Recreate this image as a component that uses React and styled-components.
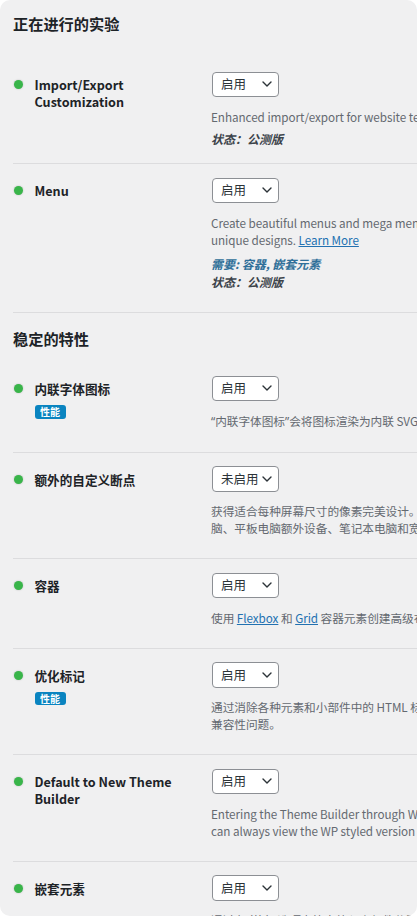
import React from "react";
import styled, { createGlobalStyle } from "styled-components";

const GlobalStyle = createGlobalStyle`
  html, body {
    margin: 0;
    padding: 0;
    background: #ffffff;
  }
  body {
    font-family: "Noto Sans CJK SC", "Noto Sans", sans-serif;
    color: #1d2327;
  }
`;

const Panel = styled.div`
  width: 417px;
  height: 916px;
  background: #f0f0f1;
  border-radius: 10px;
  overflow: hidden;
  padding-left: 13px;
  box-sizing: border-box;
`;

const Inner = styled.div`
  width: 1000px;
`;

const SectionTitle = styled.h2`
  font-size: 15.2px;
  font-weight: 700;
  line-height: 20px;
  color: #1d2327;
  margin: ${(p) => p.$top}px 0 ${(p) => p.$bottom}px;
`;

const Row = styled.div`
  display: flex;
  align-items: flex-start;
  border-bottom: 1px solid #dcdcde;
  padding-bottom: ${(p) => p.$pb ?? 22}px;
`;

const LabelCell = styled.div`
  width: 199px;
  flex-shrink: 0;
  display: flex;
  align-items: flex-start;
  padding-top: 18px;
  box-sizing: border-box;
`;

const Dot = styled.span`
  width: 9px;
  height: 9px;
  border-radius: 50%;
  background: #39b54a;
  box-shadow: 0 0 2px rgba(0, 0, 0, 0.22);
  flex-shrink: 0;
  margin: 4px 12px 0 0.5px;
`;

const LabelBody = styled.div`
  width: 142px;
`;

const LabelText = styled.div`
  font-size: 12.6px;
  font-weight: 600;
  line-height: 17px;
  color: #1d2327;
`;

const Badge = styled.span`
  display: inline-flex;
  align-items: center;
  justify-content: center;
  margin-top: 5px;
  width: 31px;
  height: 13.5px;
  border-radius: 3px;
  background: #0a84c0;
  color: #ffffff;
  font-size: 10px;
  font-weight: 700;
  line-height: 1;
`;

const ValueCell = styled.div`
  padding-top: 13.5px;
  flex: 1;
`;

const SelectBox = styled.div`
  width: 67px;
  height: 25.5px;
  box-sizing: border-box;
  border: 1px solid #8c8f94;
  border-radius: 4px;
  background: #ffffff;
  display: flex;
  align-items: center;
  justify-content: space-between;
  padding: 0 6px 0 8px;
  font-size: 12.5px;
  color: #2c3338;
  line-height: 1;
`;

const Desc = styled.p`
  margin: 10.5px 0 0 -1px;
  font-size: 11.7px;
  line-height: 17px;
  color: #646970;
  white-space: nowrap;
  letter-spacing: -0.05px;

  a {
    color: #2271b1;
    text-decoration: underline;
  }
`;

const Quote = styled.span`
  font-family: "Noto Sans", sans-serif;
`;

const Meta = styled.div`
  margin: ${(p) => p.$top ?? 7.5}px 0 0 -1px;
`;

const MetaLine = styled.div`
  font-size: 12px;
  line-height: 18px;
  font-weight: 700;
  font-style: italic;
  color: ${(p) => (p.$blue ? "#2f6f99" : "#3c434a")};
`;

const Chevron = () => (
  <svg width="10" height="6" viewBox="0 0 10 6" fill="none">
    <path
      d="M1 1l4 4 4-4"
      stroke="#2c3338"
      strokeWidth="1.4"
      strokeLinecap="round"
      strokeLinejoin="round"
    />
  </svg>
);

const Feature = ({ label, badge, value = "启用", desc, required, status, pb, metaTop }) => (
  <Row $pb={pb}>
    <LabelCell>
      <Dot />
      <LabelBody>
        <LabelText>{label}</LabelText>
        {badge && <Badge>{badge}</Badge>}
      </LabelBody>
    </LabelCell>
    <ValueCell>
      <SelectBox>
        <span>{value}</span>
        <Chevron />
      </SelectBox>
      <Desc>{desc}</Desc>
      {(required || status) && (
        <Meta $top={metaTop}>
          {required && <MetaLine $blue>需要: {required}</MetaLine>}
          {status && <MetaLine>状态：{status}</MetaLine>}
        </Meta>
      )}
    </ValueCell>
  </Row>
);

const App = () => (
  <>
    <GlobalStyle />
    <Panel>
      <Inner>
        <SectionTitle $top={13} $bottom={25}>
          正在进行的实验
        </SectionTitle>
        <Feature
          label="Import/Export Customization"
          desc="Enhanced import/export for website templates. Selectively include site content, templates, and settings."
          status="公测版"
          metaTop={5.5}
          pb={15}
        />
        <Feature
          label="Menu"
          desc={
            <>
              Create beautiful menus and mega menus with new interactive behaviors, layouts and
              <br />
              unique designs. <a href="#">Learn More</a>
            </>
          }
          required="容器, 嵌套元素"
          status="公测版"
          pb={21}
        />

        <SectionTitle $top={15} $bottom={14}>
          稳定的特性
        </SectionTitle>
        <Feature
          label="内联字体图标"
          badge="性能"
          desc={
            <>
              <Quote>“</Quote>内联字体图标<Quote>”</Quote>会将图标渲染为内联 SVG，而不加载 Font-Awesome 和 eicons 库及其相关的 CSS 文件和字体。
            </>
          }
        />
        <Feature
          label="额外的自定义断点"
          value="未启用"
          desc={
            <>
              获得适合每种屏幕尺寸的像素完美设计。现在，除了默认的台式机、平板电脑和手机之外，您还可以添加多达 6 个可自定义的断点：手机和平板电
              <br />
              脑、平板电脑额外设备、笔记本电脑和宽屏。
            </>
          }
        />
        <Feature
          label="容器"
          desc={
            <>
              使用 <a href="#">Flexbox</a> 和 <a href="#">Grid</a> 容器元素创建高级布局和响应式设计。
            </>
          }
        />
        <Feature
          label="优化标记"
          badge="性能"
          desc={
            <>
              通过消除各种元素和小部件中的 HTML 标记来减少 DOM 大小。此实验包括可能影响某些网站功能的标记更改，请在启用前进行测试以避免
              <br />
              兼容性问题。
            </>
          }
        />
        <Feature
          label="Default to New Theme Builder"
          desc={
            <>
              Entering the Theme Builder through WP Dashboard &gt; Templates &gt; Theme Builder opens the New theme builder by default. But don't worry, you
              <br />
              can always view the WP styled version of the screen with a simple click of a button.
            </>
          }
        />
        <Feature
          label="嵌套元素"
          desc={
            <>
              通过在<Quote>“</Quote>嵌套<Quote>”</Quote>选项卡等中放入小部件分层布局，创建丰富多样的页面设计。
            </>
          }
        />
      </Inner>
    </Panel>
  </>
);

export default App;
